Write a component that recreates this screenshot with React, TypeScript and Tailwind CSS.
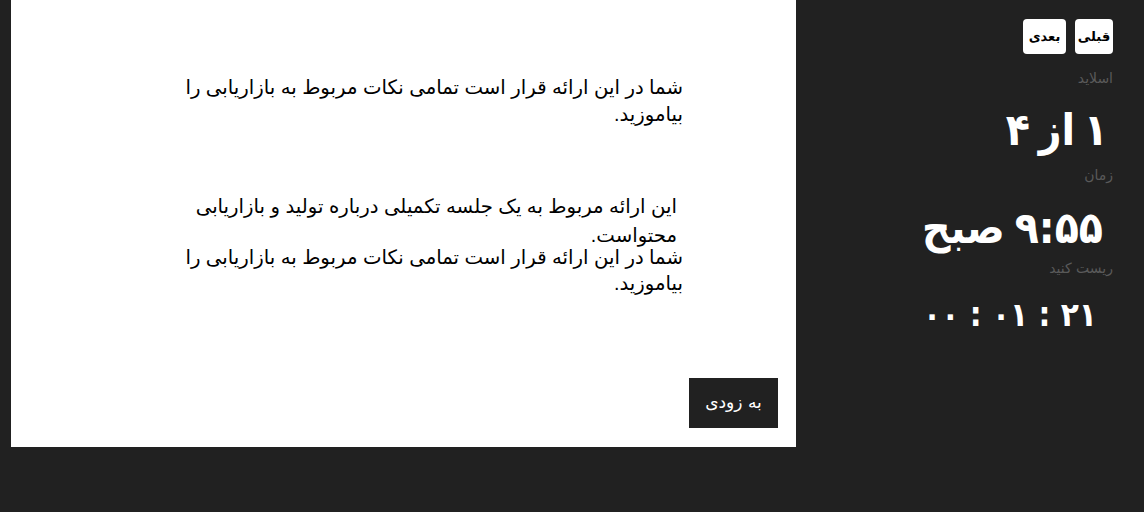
import React from "react";

export default function App() {
  return (
    <div className="flex h-[512px] w-full bg-[#212121] pl-[11px]">
      {/* slide area */}
      <div className="relative h-[447px] w-[785px] bg-white">
        <div className="flex justify-end pr-[113px] pt-[74px]">
          <div
            dir="rtl"
            className="w-[506px] text-[19.7px] text-black"
            style={{ fontFamily: '"Liberation Sans", "DejaVu Sans", sans-serif' }}
          >
            <p className="leading-[27px]">
              شما در این ارائه قرار است تمامی نکات مربوط به بازاریابی را بیاموزید.
            </p>
            <p className="mt-[64px] pr-[6px] leading-[29px]">
              این ارائه مربوط به یک جلسه تکمیلی درباره تولید و بازاریابی محتواست.
            </p>
            <p className="-mt-[6px] leading-[26px]">
              شما در این ارائه قرار است تمامی نکات مربوط به بازاریابی را بیاموزید.
            </p>
          </div>
        </div>
        <button
          className="absolute bottom-[19px] right-[18px] h-[50px] w-[89px] bg-[#212121] text-[17px] text-white"
          style={{ fontFamily: '"DejaVu Sans", sans-serif' }}
        >
          به زودی
        </button>
      </div>

      {/* sidebar */}
      <div
        dir="rtl"
        className="flex flex-1 flex-col items-start pr-[31px] pt-[19px] text-white"
        style={{ fontFamily: '"DejaVu Sans", sans-serif' }}
      >
        <div className="flex gap-[9px]">
          <button className="h-[35px] w-[38px] rounded-[4px] bg-white text-[13px] font-bold text-black">
            قبلی
          </button>
          <button className="h-[35px] w-[43px] rounded-[4px] bg-white text-[13px] font-bold text-black">
            بعدی
          </button>
        </div>
        <div className="mt-[14px] text-[14px] leading-[20px] text-[#5a5a5a]">اسلاید</div>
        <div
          className="mt-[14px] pr-[5px] text-[44px] font-bold leading-[56px] [word-spacing:-5px]"
          style={{ fontFamily: '"DejaVu Sans Condensed", "DejaVu Sans", sans-serif' }}
        >
          ۱ از ۴
        </div>
        <div className="mt-[7px] text-[14px] leading-[20px] text-[#5a5a5a]">زمان</div>
        <div
          className="mt-[15px] pr-[10px] text-[44px] font-bold leading-[56px] [word-spacing:-4px]"
          style={{ fontFamily: '"DejaVu Sans Condensed", "DejaVu Sans", sans-serif' }}
        >
          ۹:۵۵ صبح
        </div>
        <div className="mt-[2px] text-[14px] leading-[20px] text-[#5a5a5a]">ریست کنید</div>
        <div
          className="mt-[12px] pr-[16px] text-[33px] font-bold leading-[50px]"
          style={{ fontFamily: '"DejaVu Sans Condensed", "DejaVu Sans", sans-serif' }}
        >
          ۲۱ : ۰۱ : ۰۰
        </div>
      </div>
    </div>
  );
}
